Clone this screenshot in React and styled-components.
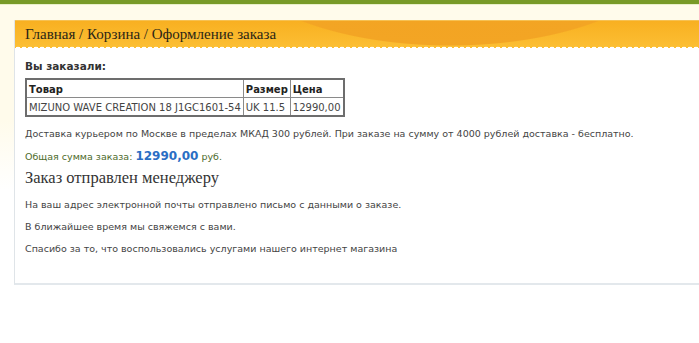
import styled, { createGlobalStyle } from 'styled-components';

const GlobalStyle = createGlobalStyle`
  html, body {
    margin: 0;
    padding: 0;
    overflow: hidden;
  }
  body {
    background: linear-gradient(#fffbeb 0, #fffbeb 120px, #ffffff 190px);
    min-height: 343px;
    font-family: "DejaVu Sans", Verdana, sans-serif;
  }
`;

// Зелёная полоса сверху
const TopBar = styled.div`
  height: 4px;
  background: #789a27;
  border-bottom: 1px solid #e8efc9;
`;

// Основной блок с содержимым
const Panel = styled.div`
  margin: 15px -20px 0 14px;
  background: #fff;
  border-left: 1px solid #dfe4e8;
  border-bottom: 2px solid #e3e8ec;
`;

// Оранжевая шапка с хлебными крошками
const Header = styled.div`
  position: relative;
  height: 27px;
  padding: 0 0 0 10px;
  display: flex;
  align-items: center;
  border-top: 1px solid #f6c152;
  background:
    radial-gradient(ellipse 227px 100px at 435px -75px, #f2a11f 0, #f3a524 99%, transparent 100%),
    linear-gradient(#f8b021, #fcbf34);
  font-family: "Liberation Serif", Georgia, serif;
  font-size: 15px;
  color: #2b2616;

  &::after {
    content: '';
    position: absolute;
    left: 0;
    right: 0;
    bottom: -2px;
    height: 4px;
    background: radial-gradient(circle at 3px 3px, #fff 0, #fff 2.2px, transparent 2.6px);
    background-size: 6px 4px;
  }
`;

const Content = styled.div`
  padding: 12px 10px 27px 10px;
  font-size: 9.5px;
  color: #333;
`;

const Caption = styled.div`
  font-weight: bold;
  font-size: 10.5px;
  margin-bottom: 6px;
`;

const Table = styled.table`
  border-collapse: collapse;
  border: 2px solid #6d6d6d;
  font-size: 10px;
  margin-bottom: 10px;
`;

const Cell = styled.td`
  border: 1px solid #8a8a8a;
  padding: 2px 2px 1px 2px;
  height: 14px;
  font-weight: ${(p) => (p.$head ? 'bold' : 'normal')};
  color: ${(p) => (p.$head ? '#222' : '#444')};
  white-space: nowrap;
`;

const Para = styled.p`
  margin: 0 0 ${(p) => p.$gap ?? 8}px;
  line-height: 14px;
  color: ${(p) => p.$color || '#444'};
`;

const Sum = styled.span`
  color: #2a6ec4;
  font-weight: bold;
  font-size: 12px;
`;

const Title = styled.h2`
  margin: 0 0 10px;
  font-family: "Liberation Serif", Georgia, serif;
  font-weight: normal;
  font-size: 16.5px;
  line-height: 20px;
  color: #333;
`;

export default function App() {
  return (
    <>
      <GlobalStyle />
      <TopBar />
      <Panel>
        <Header>Главная / Корзина / Оформление заказа</Header>
        <Content>
          <Caption>Вы заказали:</Caption>
          <Table>
            <tbody>
              <tr>
                <Cell $head>Товар</Cell>
                <Cell $head>Размер</Cell>
                <Cell $head>Цена</Cell>
              </tr>
              <tr>
                <Cell>MIZUNO WAVE CREATION 18 J1GC1601-54</Cell>
                <Cell>UK 11.5</Cell>
                <Cell>12990,00</Cell>
              </tr>
            </tbody>
          </Table>
          <Para>
            Доставка курьером по Москве в пределах МКАД 300 рублей. При заказе на сумму от 4000 рублей доставка - бесплатно.
          </Para>
          <Para $color="#4d6b2a" $gap={4}>
            Общая сумма заказа: <Sum>12990,00</Sum> руб.
          </Para>
          <Title>Заказ отправлен менеджеру</Title>
          <Para>На ваш адрес электронной почты отправлено письмо с данными о заказе.</Para>
          <Para>В ближайшее время мы свяжемся с вами.</Para>
          <Para $gap={0}>Спасибо за то, что воспользовались услугами нашего интернет магазина</Para>
        </Content>
      </Panel>
    </>
  );
}
